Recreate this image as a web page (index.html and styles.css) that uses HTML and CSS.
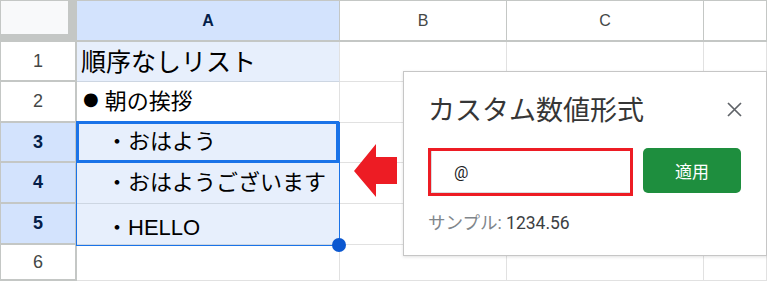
FILE: index.html
```html
<!DOCTYPE html>
<html lang="ja">
<head>
    <meta charset="UTF-8">
    <meta name="viewport" content="width=device-width, initial-scale=1.0">
    <title>カスタム数値形式</title>
    <link rel="stylesheet" href="styles.css">
</head>
<body>
    <div class="sheet">
        <div class="grid">
            <div class="corner"></div>
            <div class="col-head selected">A</div>
            <div class="col-head">B</div>
            <div class="col-head">C</div>
            <div class="col-head"></div>

            <div class="row-head">1</div>
            <div class="cell tint title-cell">順序なしリスト</div>
            <div class="cell"></div>
            <div class="cell"></div>
            <div class="cell"></div>

            <div class="row-head">2</div>
            <div class="cell row-2"><span class="dot">●</span>朝の挨拶</div>
            <div class="cell"></div>
            <div class="cell"></div>
            <div class="cell"></div>

            <div class="row-head selected">3</div>
            <div class="cell tint sub row-3">・おはよう</div>
            <div class="cell"></div>
            <div class="cell"></div>
            <div class="cell"></div>

            <div class="row-head selected">4</div>
            <div class="cell tint sub row-4">・おはようございます</div>
            <div class="cell"></div>
            <div class="cell"></div>
            <div class="cell"></div>

            <div class="row-head selected">5</div>
            <div class="cell tint sub row-5">・HELLO</div>
            <div class="cell"></div>
            <div class="cell"></div>
            <div class="cell"></div>

            <div class="row-head">6</div>
            <div class="cell"></div>
            <div class="cell"></div>
            <div class="cell"></div>
            <div class="cell"></div>
        </div>

        <!-- selection A3:A5 -->
        <div class="range"></div>
        <div class="active-cell"></div>
        <div class="fill-handle"></div>

        <svg class="arrow" width="44" height="54" viewBox="0 0 44 54">
            <polygon points="0,27 22,0 22,13 43,13 43,40 22,40 22,53" fill="#ed1c24"/>
        </svg>

        <div class="dialog">
            <div class="dialog-head">
                <h2>カスタム数値形式</h2>
                <svg class="close" width="15" height="15" viewBox="0 0 15 15">
                    <path d="M1 1 L14 14 M14 1 L1 14" stroke="#5f6368" stroke-width="1.7" fill="none"/>
                </svg>
            </div>
            <div class="form-row">
                <div class="format-input">@</div>
                <div class="apply-btn">適用</div>
            </div>
            <div class="sample"><span class="sample-label">サンプル:</span> 1234.56</div>
        </div>
    </div>
</body>
</html>
```

FILE: styles.css
```css
body, html {
    margin: 0;
    width: 767px;
    height: 283px;
    overflow: hidden;
    background: #fff;
    font-family: "Liberation Sans", "Noto Sans CJK JP", sans-serif;
}
.sheet {
    position: relative;
    width: 767px;
    height: 283px;
}
.grid {
    display: grid;
    grid-template-columns: 77px 263px 167px 197px 1fr;
    grid-template-rows: 42px 40px 41px 40px 41px 41px 36px;
}
.grid > div {
    box-sizing: border-box;
}
.corner {
    background: #f8f9fa;
    border-top: 1px solid #c4c7c5;
    border-left: 1px solid #c4c7c5;
    border-right: 9px solid #c4c7c5;
    border-bottom: 8px solid #c4c7c5;
}
.col-head {
    display: flex;
    align-items: center;
    justify-content: center;
    border-top: 1px solid #c4c7c5;
    border-right: 1px solid #c4c7c5;
    border-bottom: 2px solid #c4c7c5;
    font-size: 16px;
    color: #444746;
    padding-top: 1px;
}
.col-head.selected {
    background: #d3e3fd;
    color: #041e49;
    font-weight: bold;
}
.row-head {
    display: flex;
    align-items: center;
    justify-content: center;
    border-left: 1px solid #c4c7c5;
    border-right: 2px solid #c4c7c5;
    border-bottom: 2px solid #c4c7c5;
    font-size: 18px;
    color: #444746;
}
.row-head.selected {
    background: #d3e3fd;
    color: #041e49;
    font-weight: bold;
}
.cell {
    display: flex;
    align-items: center;
    padding-left: 4px;
    border-right: 1px solid #e1e1e1;
    border-bottom: 1px solid #e1e1e1;
    font-size: 22px;
    color: #000;
    white-space: nowrap;
}
.cell.tint {
    background: #e7effc;
    border-bottom-color: #cdd6e2;
}
.cell.title-cell {
    font-size: 25px;
    padding-bottom: 3px;
}
.cell.sub {
    padding-left: 29px;
}
.dot {
    font-family: "DejaVu Sans", sans-serif;
    font-size: 18px;
    margin-left: 2px;
    margin-right: 6px;
}
.row-2 { padding-bottom: 7px; }
.row-3 { padding-bottom: 8px; }
.row-4 { padding-bottom: 6px; }
.row-5 { padding-top: 2px; }

.range {
    position: absolute;
    left: 76px;
    top: 122px;
    width: 264px;
    height: 124px;
    box-sizing: border-box;
    border: 1px solid #1a73e8;
}
.active-cell {
    position: absolute;
    left: 76px;
    top: 121px;
    width: 263px;
    height: 42px;
    box-sizing: border-box;
    border: 3px solid #1a73e8;
}
.fill-handle {
    position: absolute;
    left: 332px;
    top: 238px;
    width: 14px;
    height: 14px;
    border-radius: 50%;
    background: #0b57d0;
}
.arrow {
    position: absolute;
    left: 354px;
    top: 144px;
}

.dialog {
    position: absolute;
    left: 403px;
    top: 71px;
    width: 364px;
    height: 185px;
    box-sizing: border-box;
    background: #fff;
    border: 1px solid #c6c6c6;
    box-shadow: 0 1px 3px rgba(0, 0, 0, 0.12);
    padding: 19px 24px 0 24px;
    font-family: Roboto, "Noto Sans CJK JP", sans-serif;
}
.dialog-head {
    display: flex;
    justify-content: space-between;
    align-items: center;
    height: 36px;
}
.dialog-head h2 {
    margin: 0;
    font-size: 27px;
    font-weight: normal;
    color: #363636;
    line-height: 36px;
    font-family: "Noto Sans CJK JP", sans-serif;
}
.close {
    margin-right: 0;
}
.form-row {
    display: flex;
    align-items: flex-start;
    gap: 10px;
    margin-top: 21px;
}
.format-input {
    box-sizing: border-box;
    width: 205px;
    height: 48px;
    border: 3px solid #ed1c24;
    box-shadow: inset 1px -1px 0 #dadce0;
    padding-left: 23px;
    display: flex;
    align-items: center;
    font-size: 16px;
    color: #202124;
}
.apply-btn {
    width: 98px;
    height: 45px;
    border-radius: 5px;
    background: #1e8e3e;
    color: #fff;
    font-size: 17px;
    display: flex;
    align-items: center;
    justify-content: center;
}
.sample {
    margin-top: 17px;
    font-size: 17.5px;
    line-height: 20px;
    color: #3c4043;
}
.sample-label {
    color: #80868b;
}
```
